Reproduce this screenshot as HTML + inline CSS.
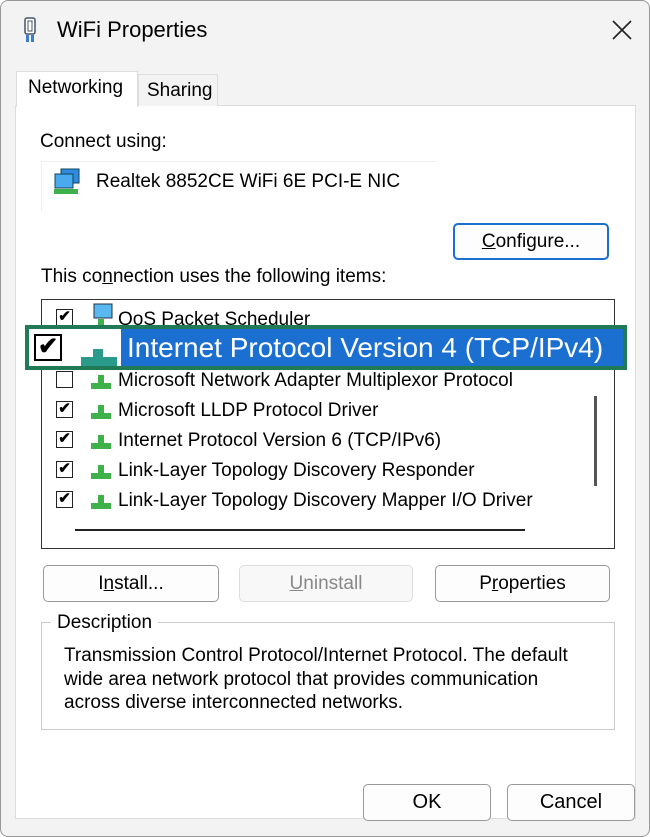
<!DOCTYPE html>
<html><head><style>
*{margin:0;padding:0;box-sizing:border-box}
body{width:650px;height:837px;background:#fff;font-family:"Liberation Sans",sans-serif;color:#000;position:relative;overflow:hidden}
.win{position:absolute;left:0;top:0;width:650px;height:837px;background:#f3f3f3;border:1px solid #999;border-radius:8px}
.a{position:absolute;white-space:nowrap}
.btn{position:absolute;border:1px solid #999;border-radius:5px;background:#fdfdfd;font-size:19px;text-align:center}
.cb{position:absolute;width:17px;height:17px;border:1.5px solid #222;background:#fff;font-size:15px;line-height:14px;text-align:center;font-weight:bold}
.ico{position:absolute;width:20px;height:14px}
.ico:before{content:"";position:absolute;left:7px;top:0;width:6px;height:8px;background:#3fb14a}
.ico:after{content:"";position:absolute;left:0;top:8px;width:20px;height:6px;background:#3fb14a}
.it{position:absolute;left:117px;font-size:19px}
</style></head><body>
<div class="win">
<svg class="a" style="left:22px;top:16px" width="14" height="26"><rect x="2" y="1" width="10" height="16" rx="2" fill="#fff" stroke="#456" stroke-width="1.5"/><rect x="5" y="4" width="4" height="10" fill="none" stroke="#456"/><rect x="3" y="18" width="3" height="7" fill="#3a7ed0"/><rect x="8" y="18" width="3" height="7" fill="#3a7ed0"/></svg>
<div class="a" style="left:56px;top:16px;font-size:22px">WiFi Properties</div>
<svg class="a" style="left:610px;top:18px" width="22" height="22"><path d="M2 2L20 20M20 2L2 20" stroke="#222" stroke-width="1.6"/></svg>
<div class="a" style="left:14px;top:104px;width:621px;height:714px;background:#fff;border:1px solid #ddd"></div>
<div class="a" style="left:15px;top:70px;width:122px;height:36px;background:#fff;border:1px solid #ddd;border-bottom:none"></div>
<div class="a" style="left:27px;top:76px;font-size:19px">Networking</div>
<div class="a" style="left:137px;top:73px;width:80px;height:32px;background:#f3f3f3;border:1px solid #ddd;border-bottom:none"></div>
<div class="a" style="left:146px;top:79px;font-size:19px">Sharing</div>
<div class="a" style="left:39px;top:130px;font-size:19px">Connect using:</div>
<div class="a" style="left:40px;top:160px;width:395px;height:50px;border-top:1px solid #eee;border-left:1px solid #eee"></div>
<svg class="a" style="left:52px;top:166px" width="30" height="28"><rect x="8" y="2" width="18" height="14" fill="#2f8ae0" stroke="#145"/><rect x="2" y="7" width="18" height="14" fill="#4aaaf0" stroke="#145"/><rect x="1" y="22" width="24" height="5" fill="#3fb14a"/></svg>
<div class="a" style="left:95px;top:170px;font-size:19px">Realtek 8852CE WiFi 6E PCI-E NIC</div>
<div class="btn" style="left:452px;top:222px;width:156px;height:37px;border:2px solid #1a6fd0;line-height:33px"><u>C</u>onfigure...</div>
<div class="a" style="left:40px;top:265px;font-size:19px">This co<u>n</u>nection uses the following items:</div>
<div class="a" style="left:40px;top:298px;width:574px;height:250px;border:1px solid #333;background:#fff"></div>
<div class="a" style="left:74px;top:528px;width:450px;height:2px;background:#222"></div>
<div class="a" style="left:593px;top:395px;width:3px;height:90px;background:#555"></div>
<div class="cb" style="left:55px;top:308px">✔</div>
<svg class="a" style="left:87px;top:302px" width="26" height="24"><rect x="6" y="1" width="18" height="14" fill="#5ab8f0" stroke="#234"/><rect x="10" y="16" width="6" height="6" fill="#3fb14a"/></svg>
<div class="it" style="top:308px">QoS Packet Scheduler</div>
<div class="cb" style="left:55px;top:370px"></div><div class="ico" style="left:90px;top:374px"></div>
<div class="it" style="top:369px">Microsoft Network Adapter Multiplexor Protocol</div>
<div class="cb" style="left:55px;top:400px">✔</div><div class="ico" style="left:90px;top:404px"></div>
<div class="it" style="top:399px">Microsoft LLDP Protocol Driver</div>
<div class="cb" style="left:55px;top:430px">✔</div><div class="ico" style="left:90px;top:434px"></div>
<div class="it" style="top:429px">Internet Protocol Version 6 (TCP/IPv6)</div>
<div class="cb" style="left:55px;top:460px">✔</div><div class="ico" style="left:90px;top:464px"></div>
<div class="it" style="top:459px">Link-Layer Topology Discovery Responder</div>
<div class="cb" style="left:55px;top:490px">✔</div><div class="ico" style="left:90px;top:494px"></div>
<div class="it" style="top:489px">Link-Layer Topology Discovery Mapper I/O Driver</div>
<div class="a" style="left:24px;top:324px;width:602px;height:45px;background:#1f7a55;"></div>
<div class="a" style="left:28px;top:328px;width:92px;height:37px;background:#fff"></div>
<div class="a" style="left:120px;top:328px;width:502px;height:37px;background:#1a6fd0"></div>
<div class="a" style="left:33px;top:333px;width:28px;height:27px;border:2px solid #000;font-size:24px;line-height:22px;text-align:center;font-weight:bold">✔</div>
<div class="a" style="left:80px;top:348px;width:36px;height:17px;"><div style="position:absolute;left:12px;top:0;width:10px;height:8px;background:#2a9a8a"></div><div style="position:absolute;left:0;top:8px;width:36px;height:9px;background:#2a9a8a"></div></div>
<div class="a" style="left:126px;top:331px;font-size:28px;color:#fff">Internet Protocol Version 4 (TCP/IPv4)</div>
<div class="btn" style="left:42px;top:564px;width:176px;height:37px;line-height:35px">I<u>n</u>stall...</div>
<div class="btn" style="left:238px;top:564px;width:174px;height:37px;line-height:35px;border-color:#ddd;color:#888;background:#f8f8f8"><u>U</u>ninstall</div>
<div class="btn" style="left:434px;top:564px;width:175px;height:37px;line-height:35px">P<u>r</u>operties</div>
<div class="a" style="left:40px;top:621px;width:574px;height:108px;border:1px solid #ccc"></div>
<div class="a" style="left:50px;top:611px;background:#fff;padding:0 6px;font-size:19px">Description</div>
<div class="a" style="left:63px;top:643px;font-size:19px;line-height:23.5px">Transmission Control Protocol/Internet Protocol. The default<br>wide area network protocol that provides communication<br>across diverse interconnected networks.</div>
<div class="btn" style="left:362px;top:783px;width:128px;height:37px;line-height:35px;font-size:20px">OK</div>
<div class="btn" style="left:506px;top:783px;width:128px;height:37px;line-height:35px;font-size:20px">Cancel</div>
</div>
</body></html>
